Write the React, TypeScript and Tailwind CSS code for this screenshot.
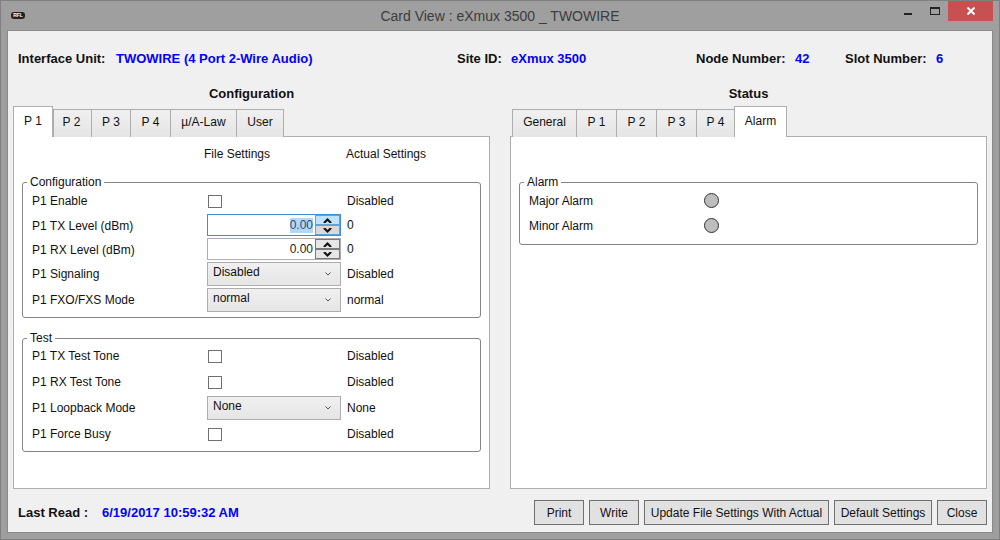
import React from 'react';

type Row = {
  label: string;
  kind: 'check' | 'spin' | 'select';
  value?: string;
  actual: string;
  h: number;
  focused?: boolean;
};

const configRows: Row[] = [
  { label: 'P1 Enable', kind: 'check', actual: 'Disabled', h: 24 },
  { label: 'P1 TX Level (dBm)', kind: 'spin', value: '0.00', actual: '0', h: 24, focused: true },
  { label: 'P1 RX Level (dBm)', kind: 'spin', value: '0.00', actual: '0', h: 24 },
  { label: 'P1 Signaling', kind: 'select', value: 'Disabled', actual: 'Disabled', h: 26 },
  { label: 'P1 FXO/FXS Mode', kind: 'select', value: 'normal', actual: 'normal', h: 26 },
];

const testRows: Row[] = [
  { label: 'P1 TX Test Tone', kind: 'check', actual: 'Disabled', h: 26 },
  { label: 'P1 RX Test Tone', kind: 'check', actual: 'Disabled', h: 26 },
  { label: 'P1 Loopback Mode', kind: 'select', value: 'None', actual: 'None', h: 26 },
  { label: 'P1 Force Busy', kind: 'check', actual: 'Disabled', h: 26 },
];

const Arrow = ({ down }: { down?: boolean }) => (
  <svg width="9" height="5" viewBox="0 0 9 5" className={down ? 'rotate-180' : ''}>
    <path d="M4.5 0 L8.5 4 V5 H6.5 L4.5 3 L2.5 5 H0.5 V4 Z" fill="#111" />
  </svg>
);

const Spin = ({ value, focused }: { value?: string; focused?: boolean }) => (
  <div className={`flex w-[134px] h-[22px] bg-white border ${focused ? 'border-[#3f8fd2]' : 'border-[#adadad]'}`}>
    <div className="flex-1 flex items-center justify-end pr-[2px] text-[#222]">
      <span className={focused ? 'bg-[#b3d7f3] text-[#2a4a80] leading-[15px]' : 'leading-[15px]'}>{value}</span>
    </div>
    <div className="w-[25px] flex flex-col">
      <div className={`h-[10px] flex items-center justify-center border ${focused ? 'bg-[#bfe3fb] border-[#5aa5e0]' : 'bg-[#e6e6e6] border-[#7a7a7a]'}`}>
        <Arrow />
      </div>
      <div className={`h-[10px] flex items-center justify-center border ${focused ? 'bg-[#d9d9d9] border-[#5aa5e0]' : 'bg-[#e6e6e6] border-[#7a7a7a]'}`}>
        <Arrow down />
      </div>
    </div>
  </div>
);

const Select = ({ value }: { value?: string }) => (
  <div className="flex items-start justify-between w-[134px] h-[24px] pl-[5px] pr-[9px] border border-[#adadad] bg-gradient-to-b from-[#f0f0f0] to-[#e5e5e5] text-[#111]">
    <span className="mt-[1px] leading-[16px]">{value}</span>
    <svg width="6" height="4" viewBox="0 0 6 4" className="mt-[9px]">
      <path d="M0.5 0.5 L3 3 L5.5 0.5" fill="none" stroke="#555" />
    </svg>
  </div>
);

const FormRow = ({ row }: { row: Row }) => (
  <div className="grid grid-cols-[175px_140px_1fr] items-center" style={{ height: row.h }}>
    <span className={row.kind === 'spin' ? 'mt-[2px]' : ''}>{row.label}</span>
    <div>
      {row.kind === 'check' && <div className="ml-[1px] w-[14px] h-[13px] bg-white border border-[#707070]" />}
      {row.kind === 'spin' && <Spin value={row.value} focused={row.focused} />}
      {row.kind === 'select' && <Select value={row.value} />}
    </div>
    <span>{row.actual}</span>
  </div>
);

const Group = ({ title, className, children }: { title: string; className: string; children: React.ReactNode }) => (
  <fieldset className={`border border-[#858585] rounded-[3px] pl-[9px] ${className}`}>
    <legend className="-ml-[5px] px-[3px] leading-[14px]">{title}</legend>
    {children}
  </fieldset>
);

const Tabs = ({
  items,
  active,
  widths,
  pads = [],
}: {
  items: string[];
  active: string;
  widths: number[];
  pads?: number[];
}) => (
  <div className="flex items-end h-[31px] relative z-10 -mb-[1px]">
    {items.map((t, i) =>
      t === active ? (
        <div
          key={t}
          className="h-[31px] flex items-center justify-center pb-[3px] bg-white border border-b-0 border-[#adadad] shrink-0"
          style={{ width: widths[i] }}
        >
          {t}
        </div>
      ) : (
        <div
          key={t}
          className="h-[28px] flex items-center justify-center pb-[3px] bg-gradient-to-b from-[#f0f0f0] to-[#e5e5e5] border border-b-0 border-r-0 last:border-r border-[#adadad] shrink-0"
          style={{ width: widths[i], paddingRight: pads[i] ?? 0 }}
        >
          {t}
        </div>
      ),
    )}
  </div>
);

const Button = ({ label, w }: { label: string; w: number }) => (
  <button className="h-[25px] bg-[#e1e1e1] border border-[#707070] text-[#111] shrink-0" style={{ width: w }}>
    {label}
  </button>
);

export default function App() {
  return (
    <div className="w-[1000px] h-[540px] flex flex-col bg-[#9f9f9f] shadow-[inset_0_0_0_1px_#808080] overflow-hidden text-[12px] text-[#111] font-['Liberation_Sans',Arial,sans-serif]">
      {/* title bar */}
      <div className="h-[30px] shrink-0 flex items-start relative">
        <div className="ml-[11px] mt-[12px] w-[14px] h-[7px] rounded-[3px] bg-[#222] text-white text-[5px] leading-[7px] text-center font-bold">
          RFL
        </div>
        <div className="absolute inset-x-0 top-[7px] text-center text-[14px] leading-[18px] text-[#3c3c3c]">
          Card View : eXmux 3500 _ TWOWIRE
        </div>
        <div className="ml-auto mr-[7px] flex items-start">
          <div className="w-[8px] h-[2px] mt-[13px] bg-[#222]" />
          <div className="ml-[18px] mt-[7px] w-[10px] h-[8px] border border-t-2 border-[#222]" />
          <div className="ml-[8px] mt-[1px] w-[45px] h-[20px] bg-[#c75050] flex items-center justify-center">
            <svg width="8" height="8" viewBox="0 0 8 8">
              <path d="M0.5 0.5 L7.5 7.5 M7.5 0.5 L0.5 7.5" stroke="#fff" strokeWidth="2" />
            </svg>
          </div>
        </div>
      </div>

      <div className="mx-[7px] mb-[7px] flex-1 flex flex-col bg-[#f0f0f0] border border-[#8a8a8a] px-[5px]">
        {/* header row */}
        <div className="h-[55px] pt-[20px] pl-[5px] flex font-bold text-[13px] leading-[15px] shrink-0">
          <span className="w-[98px]">Interface Unit:</span>
          <span className="w-[341px] text-[#0000ff]">TWOWIRE (4 Port 2-Wire Audio)</span>
          <span className="w-[54px]">Site ID:</span>
          <span className="w-[185px] text-[#0000ff]">eXmux 3500</span>
          <span className="w-[99px]">Node Number:</span>
          <span className="w-[50px] text-[#0000ff]">42</span>
          <span className="w-[91px]">Slot Number:</span>
          <span className="text-[#0000ff]">6</span>
        </div>

        <div className="flex gap-[20px] flex-1 min-h-0">
          {/* configuration */}
          <div className="w-[477px] flex flex-col">
            <div className="h-[20px] text-center font-bold text-[13px] leading-[16px] shrink-0">Configuration</div>
            <Tabs
              items={['P 1', 'P 2', 'P 3', 'P 4', 'µ/A-Law', 'User']}
              active="P 1"
              widths={[40, 38, 39, 40, 66, 48]}
              pads={[0, 2]}
            />
            <div className="h-[353px] bg-white border border-[#adadad] px-[8px]">
              <div className="h-[38px] grid grid-cols-[182px_142px_1fr] pt-[10px] leading-[15px]">
                <span />
                <span>File Settings</span>
                <span>Actual Settings</span>
              </div>
              <Group title="Configuration" className="h-[143px] mb-[13px]">
                {configRows.map((r) => (
                  <FormRow key={r.label} row={r} />
                ))}
              </Group>
              <Group title="Test" className="h-[121px]">
                <div className="-mt-[2px]">
                  {testRows.map((r) => (
                    <FormRow key={r.label} row={r} />
                  ))}
                </div>
              </Group>
            </div>
          </div>

          {/* status */}
          <div className="w-[477px] flex flex-col">
            <div className="h-[20px] text-center font-bold text-[13px] leading-[16px] shrink-0">Status</div>
            <div className="pl-[2px]">
              <Tabs
                items={['General', 'P 1', 'P 2', 'P 3', 'P 4', 'Alarm']}
                active="Alarm"
                widths={[64, 40, 40, 40, 38, 53]}
              />
            </div>
            <div className="h-[353px] bg-white border border-[#adadad] px-[8px] pt-[38px]">
              <Group title="Alarm" className="h-[70px]">
                <div className="-mt-[1px]">
                  {['Major Alarm', 'Minor Alarm'].map((a) => (
                    <div key={a} className="h-[25px] flex items-center">
                      <span className="w-[175px]">{a}</span>
                      <div className="w-[15px] h-[15px] rounded-full bg-[#bdbdbd] border border-[#333]" />
                    </div>
                  ))}
                </div>
              </Group>
            </div>
          </div>
        </div>

        {/* footer */}
        <div className="h-[42px] shrink-0 flex items-start pl-[5px] pt-[10px]">
          <span className="w-[84px] font-bold text-[13px] leading-[25px]">Last Read :</span>
          <span className="font-bold text-[13px] text-[#0000ff] leading-[25px]">6/19/2017 10:59:32 AM</span>
          <div className="ml-auto flex gap-[5px]">
            <Button label="Print" w={50} />
            <Button label="Write" w={50} />
            <Button label="Update File Settings With Actual" w={185} />
            <Button label="Default Settings" w={98} />
            <Button label="Close" w={50} />
          </div>
        </div>
      </div>
    </div>
  );
}
